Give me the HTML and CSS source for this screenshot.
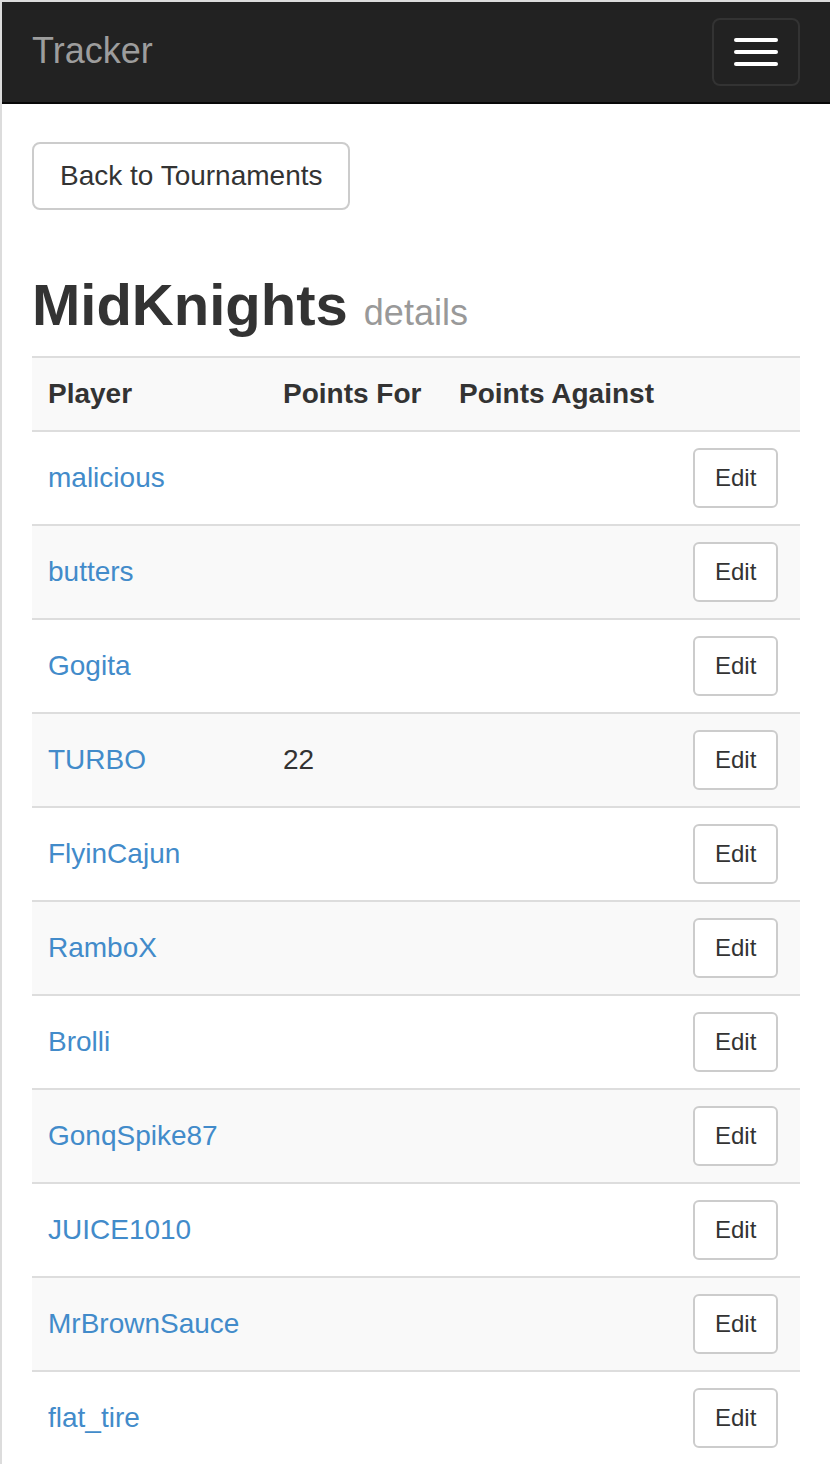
FILE: index.html
```html
<!DOCTYPE html>
<html lang="en">
<head>
<meta charset="utf-8">
<title>Tracker</title>
<link rel="stylesheet" href="styles.css">
</head>
<body>
<nav class="navbar">
  <a class="brand" href="#">Tracker</a>
  <button class="toggle" type="button" aria-label="Toggle navigation">
    <span class="bar"></span><span class="bar"></span><span class="bar"></span>
  </button>
</nav>
<main class="container">
  <a class="btn" href="#">Back to Tournaments</a>
  <h1 class="title">MidKnights <small class="sub">details</small></h1>
  <table class="players">
    <colgroup>
      <col class="c1"><col class="c2"><col class="c3"><col class="c4">
    </colgroup>
    <thead>
      <tr><th>Player</th><th>Points For</th><th>Points Against</th><th></th></tr>
    </thead>
    <tbody>
      <tr><td><a class="link" href="#">malicious</a></td><td></td><td></td><td><a class="btn-sm" href="#">Edit</a></td></tr>
      <tr><td><a class="link" href="#">butters</a></td><td></td><td></td><td><a class="btn-sm" href="#">Edit</a></td></tr>
      <tr><td><a class="link" href="#">Gogita</a></td><td></td><td></td><td><a class="btn-sm" href="#">Edit</a></td></tr>
      <tr><td><a class="link" href="#">TURBO</a></td><td>22</td><td></td><td><a class="btn-sm" href="#">Edit</a></td></tr>
      <tr><td><a class="link" href="#">FlyinCajun</a></td><td></td><td></td><td><a class="btn-sm" href="#">Edit</a></td></tr>
      <tr><td><a class="link" href="#">RamboX</a></td><td></td><td></td><td><a class="btn-sm" href="#">Edit</a></td></tr>
      <tr><td><a class="link" href="#">Brolli</a></td><td></td><td></td><td><a class="btn-sm" href="#">Edit</a></td></tr>
      <tr><td><a class="link" href="#">GonqSpike87</a></td><td></td><td></td><td><a class="btn-sm" href="#">Edit</a></td></tr>
      <tr><td><a class="link" href="#">JUICE1010</a></td><td></td><td></td><td><a class="btn-sm" href="#">Edit</a></td></tr>
      <tr><td><a class="link" href="#">MrBrownSauce</a></td><td></td><td></td><td><a class="btn-sm" href="#">Edit</a></td></tr>
      <tr><td><a class="link" href="#">flat_tire</a></td><td></td><td></td><td><a class="btn-sm" href="#">Edit</a></td></tr>
    </tbody>
  </table>
</main>
</body>
</html>
```
FILE: styles.css
```css
* { box-sizing: border-box; }
html, body { margin: 0; padding: 0; }
body {
  font-family: "Liberation Sans", Arial, Helvetica, sans-serif;
  font-size: 28px;
  line-height: 40px;
  color: #333;
  background: #fff;
  border-top: 2px solid #dcdcdc;
  border-left: 2px solid #dcdcdc;
  min-height: 100vh;
}
.navbar {
  height: 102px;
  background: #222;
  border-bottom: 2px solid #080808;
  display: flex;
  justify-content: space-between;
  align-items: flex-start;
  padding: 0 30px;
}
.brand {
  font-size: 36px;
  line-height: 40px;
  padding: 29px 0 31px;
  color: #9d9d9d;
  text-decoration: none;
}
.toggle {
  margin-top: 16px;
  width: 88px;
  height: 68px;
  padding: 18px 20px;
  background: transparent;
  border: 2px solid #333;
  border-radius: 8px;
  display: flex;
  flex-direction: column;
  justify-content: center;
  gap: 8px;
}
.bar {
  display: block;
  width: 44px;
  height: 4px;
  border-radius: 2px;
  background: #fff;
}
.container {
  padding: 38px 30px 0;
}
.btn {
  display: inline-block;
  height: 68px;
  padding: 12px 25px 12px 26px;
  font-size: 28px;
  line-height: 40px;
  color: #333;
  background: #fff;
  border: 2px solid #ccc;
  border-radius: 8px;
  text-decoration: none;
  vertical-align: top;
}
.title {
  margin: 63px 0 19px;
  font-size: 58px;
  line-height: 64px;
  font-weight: bold;
  color: #333;
}
.sub {
  font-size: 36px;
  line-height: 1;
  font-weight: normal;
  color: #999;
}
.players {
  width: 100%;
  border-collapse: collapse;
  table-layout: fixed;
}
.c1 { width: 235px; }
.c2 { width: 176px; }
.c3 { width: 234px; }
.c4 { width: 123px; }
.players th, .players td {
  padding: 16px;
  border-top: 2px solid #ddd;
  text-align: left;
  vertical-align: middle;
  line-height: 40px;
}
.players th {
  font-weight: bold;
  white-space: nowrap;
}
.players thead tr { background: #f9f9f9; }
.players tbody tr:nth-child(even) { background: #f9f9f9; }
.link {
  color: #428bca;
  text-decoration: none;
}
.btn-sm {
  display: inline-block;
  height: 60px;
  padding: 10px 20px;
  font-size: 24px;
  line-height: 36px;
  color: #333;
  background: #fff;
  border: 2px solid #ccc;
  border-radius: 6px;
  text-decoration: none;
  vertical-align: middle;
}
```
